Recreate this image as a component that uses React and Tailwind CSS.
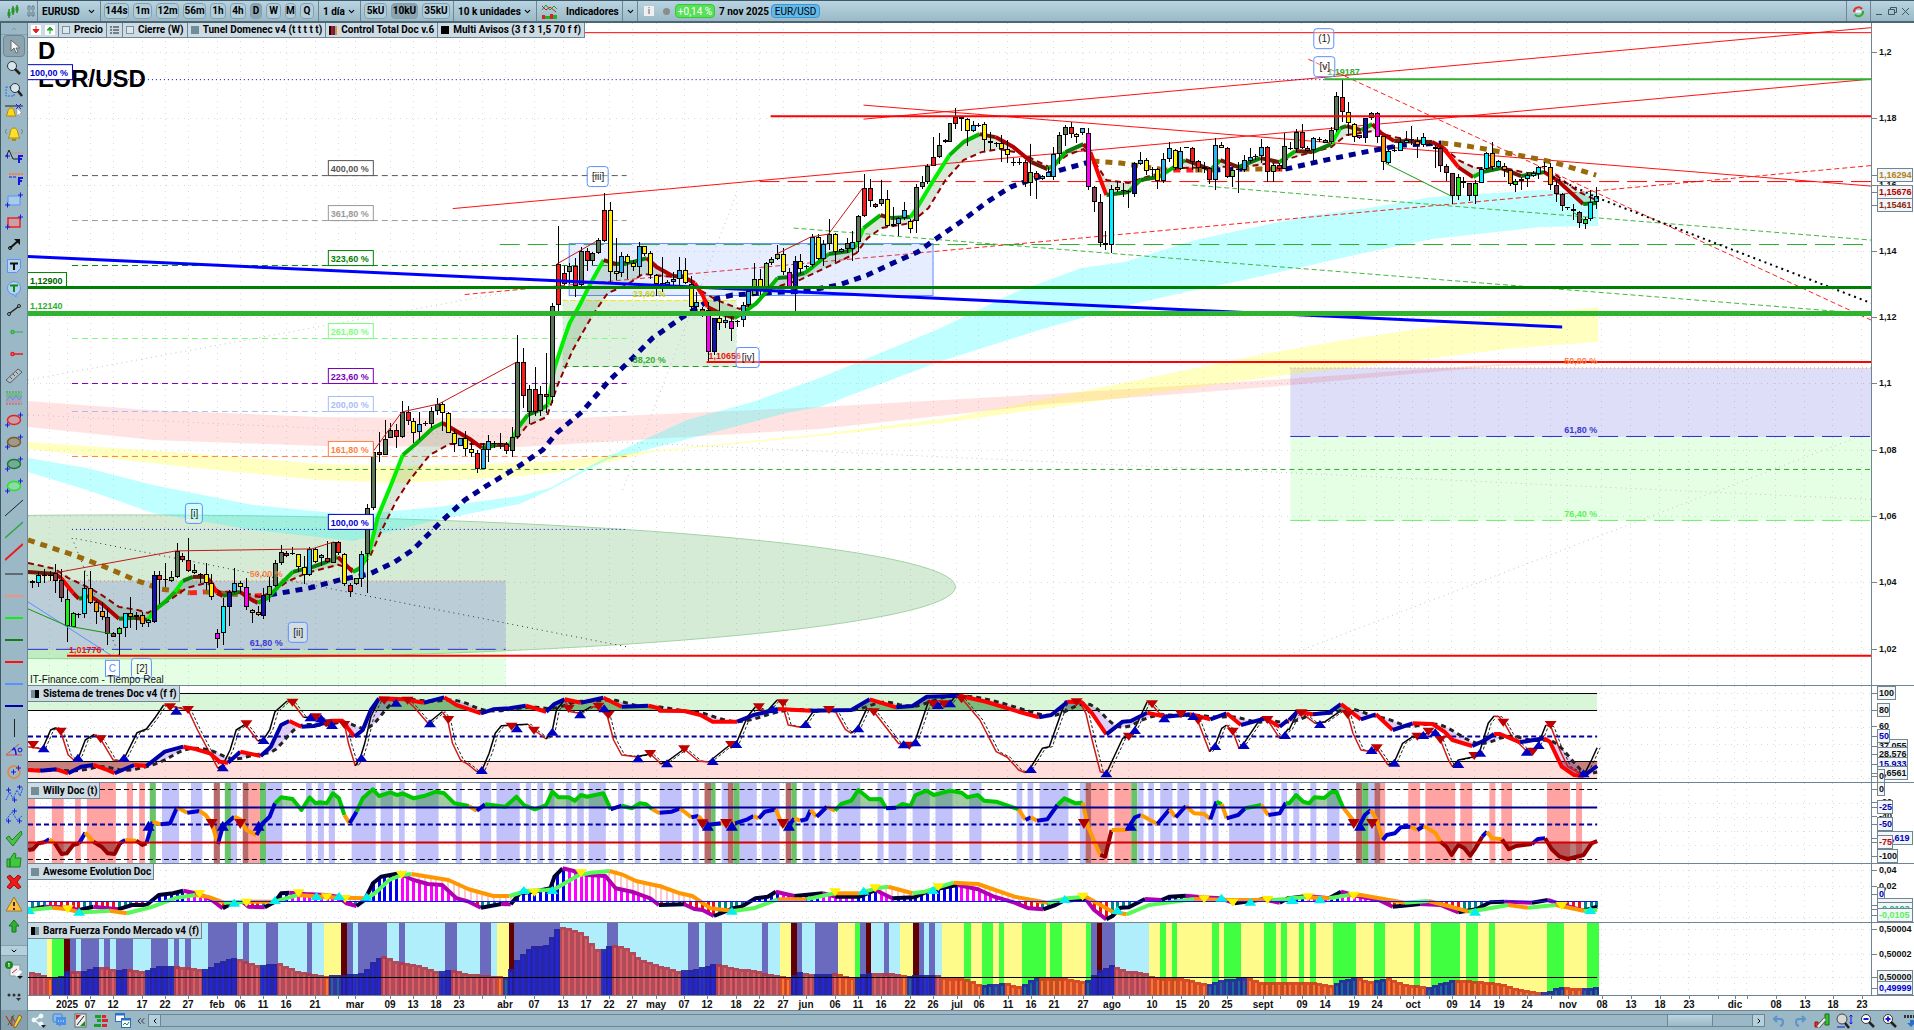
import React from "react";
import { ChevronDown, ChevronUp, ChevronLeft, ChevronRight, ChevronsLeft } from "lucide-react";

/* ---------- geometry helpers ---------- */

const X0 = 32.3;
const STEP = 5.7745;
const DATA_END = 1598;
const barX = (i) => X0 + i * STEP;

// A run of points stored relative to an origin, x in `sx` units per pixel and y in thirds of a pixel.
const run = (ox, sx, oy, text) =>
  text.split("|").map((p) => {
    const [x, y] = p.split(",").map(Number);
    return [ox + x / sx, oy + y / 3];
  });

const px = (text) => text.split("|").map((p) => p.split(",").map(Number));

const lower = (a, b, c) => [
  ...(a ? run(20, 2.45, 680, a) : []),
  ...(b ? run(660, 2.45, 680, b) : []),
  ...(c ? run(1290, 2.513, 680, c) : []),
];

const spans = (a, b, c) =>
  [
    [20, 2.45, a],
    [660, 2.45, b],
    [1290, 2.513, c],
  ].flatMap(([ox, sx, text]) =>
    text
      ? text.split("|").map((s) => {
          const [l, r] = s.split("-").map(Number);
          return [ox + l / sx, ox + r / sx];
        })
      : []
  );

const d = (pts) => "M" + pts.map((p) => `${p[0].toFixed(1)} ${p[1].toFixed(1)}`).join("L");
const area = (top, bottom) => d([...top, ...[...bottom].reverse()]) + "Z";

const valueAt = (pts, x) => {
  if (x <= pts[0][0]) return pts[0][1];
  for (let i = 1; i < pts.length; i++) {
    if (x <= pts[i][0]) {
      const [x1, y1] = pts[i - 1];
      const [x2, y2] = pts[i];
      return x2 === x1 ? y2 : y1 + ((y2 - y1) * (x - x1)) / (x2 - x1);
    }
  }
  return pts[pts.length - 1][1];
};

const resample = (pts) => {
  const out = [];
  for (let x = 28; x < DATA_END; x += STEP) out.push([x, valueAt(pts, x)]);
  out.push([DATA_END, valueAt(pts, DATA_END)]);
  return out;
};

// Splits a line into same-coloured stretches.
function Tinted({ pts, color, width }) {
  const groups = [];
  for (let i = 1; i < pts.length; i++) {
    const c = color(pts[i - 1], pts[i]);
    const last = groups[groups.length - 1];
    if (last && last.c === c) last.pts.push(pts[i]);
    else groups.push({ c, pts: [pts[i - 1], pts[i]] });
  }
  return groups.map((g, i) => (
    <path key={i} d={d(g.pts)} fill="none" stroke={g.c} strokeWidth={width} strokeLinejoin="round" />
  ));
}

/* ---------- price data ---------- */

const BODY = {
  g: "#5b7558", r: "#ff1a1a", y: "#fff200", c: "#2db4f0", C: "#00f0ff", m: "#ff00f0",
  b: "#1414b0", o: "#ff9a10", n: "#82404c", l: "#14f014", L: "#7cc04a", k: "#000",
};

const CANDLE_RUNS = [
  [420, "480,484,490,505,k|457,466,490,500,C|448,465,465,490,k|452,465,466,482,k|433,460,482,518,n|448,480,535,545,n|508,538,618,665,l|575,580,620,620,l|578,582,584,595,k|453,505,583,595,C|453,505,548,552,o|540,546,575,612,o|545,573,592,600,o|565,592,643,675,n|635,640,650,650,n|620,625,643,705,l|578,580,625,650,C|532,580,592,625,o|575,585,592,630,C|575,586,613,620,o|597,600,608,622,C|453,465,607,610,b|453,466,480,553,r|430,478,480,500,k|452,472,482,487,L|368,394,472,475,g|400,408,421,425,r|355,420,452,457,r|433,451,460,462,L|460,462,463,490,k|430,463,490,510,y|462,490,530,540,y|627,640,658,685,m|533,558,640,675,C|510,517,560,617,b|445,490,517,520,c|483,490,502,520,y|475,502,562,570,m|568,571,579,608,o|557,577,586,588,o|505,526,587,597,b|470,497,525,545,L|420,428,497,500,g|375,397,428,435,g|393,400,407,410,r|382,400,402,405,k|402,403,440,455,y|408,440,465,492,y|382,388,466,467,c|385,388,427,430,y|402,406,415,438,c|362,415,427,430,r|365,367,428,430,g|362,367,400,405,r|400,401,492,497,y|490,494,515,530,r|473,475,493,495,L|393,403,477,500,c|253,265,403,520,g|70,97,265,270,g"],
  [150, "845,907,914,935,r|810,866,914,915,g|820,840,865,865,g|823,840,862,895,r|753,787,862,865,g|768,787,813,825,r|805,813,848,880,y|785,823,847,870,c|813,820,822,827,k|770,783,822,833,g|745,763,782,795,g|755,763,790,843,y|785,790,848,850,y|838,848,883,905,y|863,865,887,887,c|843,865,898,917,y|875,898,910,922,y|900,910,958,970,r|880,898,958,958,c|855,873,900,937,c|872,880,883,895,k|848,880,883,898,k|875,883,902,912,r|832,862,902,920,g|555,637,862,865,g|593,637,738,775,r|705,718,787,822,g|650,718,785,797,r|708,733,783,797,g|608,733,742,790,r|460,468,740,758,g|228,343,466,482,r|348,370,402,405,r|340,347,367,403,g|325,348,408,440,r|292,303,405,407,g|295,303,334,362,r|305,310,334,345,g|263,271,310,312,g|128,181,272,275,r|155,181,367,397,y|265,363,371,390,y|305,317,370,382,c|313,317,338,388,y|330,338,350,363,y|277,289,352,378,c|287,289,311,317,y|303,310,376,387,y|373,376,403,437,y|320,400,402,425,b|390,397,405,408,c|365,388,397,407,c|322,361,388,415,c|323,361,400,403,y|378,401,470,482,y|425,455,470,487,c|470,478,486,500,r|455,479,607,632,m|503,505,607,615,b|447,505,520,540,y|490,511,520,535,c|500,512,538,572,m|510,513,517,530,b|455,466,511,530,c|420,423,466,470,c|340,388,435,435,L|358,388,410,435,y|337,340,410,412,L|320,328,338,345,L|285,313,328,330,L|295,313,367,375,y|355,367,410,410,m|317,332,415,485,b|313,332,356,372,y|345,347,350,358,k|253,260,346,350,c|252,260,328,330,y"],
  [90, "450,462,508,528,c|388,433,463,480,g|428,433,487,517,y|475,478,487,490,c|445,460,478,488,g|422,455,478,512,c|375,379,455,485,g|253,295,379,382,r|267,295,332,350,r|338,343,352,355,r|270,328,343,348,g|300,328,409,410,y|350,403,409,410,c|382,385,403,437,c|337,361,385,390,c|387,394,416,430,y|283,291,394,430,g|258,277,291,297,g|222,227,277,283,g|140,202,227,227,r|130,166,202,203,g|147,150,155,160,g|93,99,155,170,g|55,82,101,118,r|80,82,88,123,r|83,88,123,167,y|92,106,124,125,c|100,104,106,110,k|95,103,151,183,y|125,152,158,180,y|155,158,161,172,g|135,160,178,217,y|150,178,195,220,y|203,216,219,228,k|203,216,219,225,k|210,217,280,290,r|162,247,280,318,L|243,248,268,328,r|255,259,267,270,c|230,246,261,262,c|170,191,260,270,c|125,136,191,223,g|105,112,136,167,g|97,112,133,145,r|128,133,142,160,y|113,115,130,135,c|115,130,290,300,m|287,290,335,365,n|313,335,460,470,n|422,460,466,480,k|285,298,466,490,C|273,291,301,305,o|278,301,303,320,k|300,303,306,355,k|215,220,311,320,b|185,211,222,225,c|205,211,243,255,y|230,238,240,262,k|233,238,272,297,y|190,208,272,280,c|155,175,208,215,c|177,179,235,240,y|172,182,236,240,c|170,172,174,175,k|172,173,215,240,r|210,214,233,245,r|217,230,238,250,r|232,235,271,283,r|143,164,271,300,c|157,165,173,175,y|172,173,262,264,r|230,241,262,290,L|215,238,241,310,k|195,211,241,245,c|175,200,213,220,c|193,197,199,210,k|147,172,197,220,c|167,172,247,275,r|220,224,247,275,L|220,224,236,243,r|130,167,236,237,g|155,175,178,180,k|118,125,178,185,g|103,125,173,178,r|168,173,182,185,r"],
  [20, "350,355,390,422,c|350,357,358,365,k|357,360,368,370,g|322,331,367,372,g|217,228,331,335,g|180,230,277,305,r|245,277,308,347,y|308,311,350,367,y|345,346,355,357,m|293,295,355,370,b|275,280,293,300,g|277,280,352,368,m|347,349,427,450,o|388,394,428,432,C|375,390,393,395,k|353,366,392,393,C|333,360,368,370,C|317,358,360,375,k|350,362,376,413,o|338,352,375,380,C|370,372,374,378,k|375,380,387,443,n|380,384,437,455,n|432,437,460,483,n|460,460,529,553,n|463,471,529,540,l|472,484,490,505,n|488,490,527,543,n|480,489,527,552,l|442,447,490,490,C|397,399,447,450,C|365,399,441,450,o|420,424,440,443,C|430,438,450,470,o|450,451,493,497,o|478,482,494,517,l|470,476,484,510,C|458,466,477,500,C|452,458,467,470,C|438,442,463,477,C|427,438,440,458,k|430,440,495,510,o|480,494,523,545,n|520,523,557,573,n|560,562,565,570,k|553,566,574,600,l|573,577,608,623,n|590,597,611,627,l|510,547,598,602,C|500,529,545,567,C"],
];

const CANDLES = CANDLE_RUNS.flatMap(([base, text]) =>
  text.split("|").map((row) => {
    const c = row.split(",");
    const y = (v) => Math.round(base + Number(v) / 3);
    return { high: y(c[0]), top: y(c[1]), bottom: y(c[2]), low: y(c[3]), kind: c[4] };
  })
);

const FAST_MA = px("28,572|55,574|61,578|73,593|79,599|90,596|102,604|119,619|135,618|148,620|155,610|165,602|175,592|183,581|193,577|206,577|211,582|217,593|223,596|240,592|252,600|258,603|268,598|278,587|293,572|313,567|327,562|338,557|348,567|353,572|361,568|370,550|378,517|392,483|403,455|417,443|433,428|443,423|453,429|470,439|482,448|497,445|510,445|518,428|528,415|538,411|548,405|555,367|565,337|570,323|580,305|590,285|604,260|617,264|633,262|647,258|657,267|673,276|684,277|695,283|703,295|708,307|720,313|735,318|743,313|757,303|768,290|778,278|790,277|805,273|813,267|829,254|850,251|857,245|864,228|881,215|891,218|911,217|918,207|936,177|950,155|964,142|980,134|996,137|1014,147|1032,162|1048,169|1055,165|1066,152|1084,144|1091,152|1100,177|1107,195|1129,192|1141,180|1159,177|1173,168|1186,160|1200,165|1211,170|1221,160|1239,167|1261,158|1280,162|1296,151|1313,152|1332,144|1341,128|1347,126|1362,130|1373,124|1382,133|1395,141|1433,142|1444,148|1459,167|1474,177|1483,172|1502,168|1522,176|1545,172|1558,180|1584,204|1597,203");
const SLOW_MA = px("28,563|55,569|68,578|87,587|100,594|119,607|137,610|148,613|167,602|187,588|207,583|220,592|240,592|260,597|273,592|287,582|307,573|338,565|357,570|370,557|382,530|397,500|410,480|430,455|450,444|513,444|527,426|547,417|558,385|573,350|593,315|608,293|627,285|643,274|687,278|700,290|717,300|740,309|757,302|773,288|800,280|817,272|836,263|857,253|868,238|882,228|911,223|929,208|946,180|964,160|982,152|1000,149|1021,153|1050,167|1068,155|1084,149|1096,163|1107,180|1129,183|1143,178|1179,168|1214,167|1250,166|1279,162|1298,156|1332,147|1347,135|1373,131|1395,137|1442,145|1459,160|1476,168|1506,168|1528,173|1554,173|1580,192|1597,200");

const LONG_MA = [
  ["#9a6a0a", "28,540|76,556|105,567|135,580|160,589|190,593"],
  ["#ff2020", "190,593|205,592"],
  ["#9a6a0a", "205,592|255,596"],
  ["#ff2020", "255,596|270,595"],
  ["#00008f", "270,595|310,588|340,580|370,574|395,562|413,550|440,523|465,500|485,487|518,467|543,450|557,433|582,412|610,380|633,358|653,338|683,317|710,300|733,295|763,293|806,291|839,285|868,275|889,265|918,252|939,237|961,222|986,203|1011,187|1036,178|1061,170|1093,161"],
  ["#9a6a0a", "1093,161|1121,163|1161,169"],
  ["#ff2020", "1161,170|1196,170"],
  ["#9a6a0a", "1196,170|1214,170"],
  ["#00008f", "1214,170|1243,169"],
  ["#9a6a0a", "1243,169|1276,169"],
  ["#ff2020", "1276,169|1286,169"],
  ["#00008f", "1286,169|1326,160|1365,152|1403,145|1442,143"],
  ["#9a6a0a", "1442,143|1455,144|1481,148|1519,155|1554,162|1597,175"],
];

const PINK = area(
  px("28,401|150,410|320,417|553,419|820,407|1050,394|1270,380|1400,371|1500,364|1597,361"),
  px("28,427|153,440|320,446|520,447|687,437|820,429|1050,404|1270,387|1400,375|1500,366|1597,363")
);
const YELLOW = area(
  px("28,442|187,453|320,464|400,466|487,464|560,461|610,455|700,446|820,434|950,418|1050,398|1270,353|1345,340|1498,317|1599,307"),
  px("28,449|187,467|320,480|400,483|513,477|560,472|610,462|653,452|820,436|950,422|1050,408|1270,377|1401,362|1516,348|1599,342")
);
const CYAN = area(
  px("28,458|87,468|153,485|253,505|353,515|437,507|520,496|550,488|607,457|687,420|753,402|820,378|939,329|1014,293|1082,268|1125,262|1196,240|1307,216|1369,208|1433,197|1541,190|1599,193"),
  px("28,472|87,490|153,513|253,530|353,541|437,520|520,504|550,490|607,460|700,436|787,413|820,407|939,362|1043,329|1129,305|1196,290|1240,281|1369,252|1433,239|1541,227|1599,226")
);

/* ---------- axis data ---------- */

const DATES = [
  [67, "2025"], [90, "07"], [113, "12"], [142, "17"], [165, "22"], [188, "27"], [217, "feb"], [240, "06"], [263, "11"],
  [286, "16"], [315, "21"], [355, "mar"], [390, "09"], [413, "13"], [436, "18"], [459, "23"], [505, "abr"], [534, "07"],
  [563, "13"], [586, "17"], [609, "22"], [632, "27"], [656, "may"], [684, "07"], [707, "12"], [736, "18"], [759, "22"],
  [783, "27"], [806, "jun"], [835, "06"], [858, "11"], [881, "16"], [910, "22"], [933, "26"], [957, "jul"], [979, "06"],
  [1008, "11"], [1031, "16"], [1054, "21"], [1083, "27"], [1112, "ago"], [1152, "10"], [1181, "15"], [1204, "20"],
  [1227, "25"], [1263, "sept"], [1302, "09"], [1325, "14"], [1354, "19"], [1377, "24"], [1413, "oct"], [1452, "09"],
  [1475, "14"], [1499, "19"], [1527, "24"], [1568, "nov"], [1602, "08"], [1631, "13"], [1660, "18"], [1689, "23"],
  [1735, "dic"], [1776, "08"], [1805, "13"], [1833, "18"], [1862, "23"],
];
const MINOR = [49, 338, 482, 1129, 1280, 1400, 1429, 1551, 1718, 1747];
const GRID_X = [...DATES.map((x) => x[0]), ...MINOR];

const PRICES = [
  [52, "1,2"], [118, "1,18"], [185, "1,16"], [251, "1,14"], [317, "1,12"], [383, "1,1"], [450, "1,08"], [516, "1,06"],
  [582, "1,04"], [649, "1,02"],
];

const FONT = "'Liberation Sans', Arial, sans-serif";

function Grid({ y1, y2, rows }) {
  return (
    <g stroke="#dcdcdc" strokeWidth="1" strokeDasharray="1 5" shapeRendering="crispEdges">
      {GRID_X.map((x) => (
        <line key={x} x1={x + 0.5} x2={x + 0.5} y1={y1} y2={y2} />
      ))}
      {rows.map((y) => (
        <line key={y} x1="28" x2="1872" y1={y + 0.5} y2={y + 0.5} />
      ))}
    </g>
  );
}

function Panel({ top, height, className, legend, children, axis }) {
  return (
    <section className={`flex min-h-0 border-t border-[#6f8692] ${className}`}>
      <div className="relative min-w-0 flex-1 border-r border-[#6f8692]">
        <svg
          className="absolute inset-0 h-full w-full"
          viewBox={`28 ${top} 1844 ${height}`}
          preserveAspectRatio="xMinYMid meet"
          fontFamily={FONT}
        >
          {children}
        </svg>
        {legend}
      </div>
      <svg
        className="h-full w-[42px] shrink-0"
        viewBox={`1872 ${top} 42 ${height}`}
        preserveAspectRatio="xMinYMid meet"
        fontFamily={FONT}
        fontSize="9"
        fontWeight="700"
      >
        {axis}
      </svg>
    </section>
  );
}

function AxisTick({ y, text, color = "#111", boxed, w = 35 }) {
  return (
    <g>
      <path d={`M1872 ${y + 0.5}h5`} stroke="#6f8692" />
      {boxed && <rect x="1877.5" y={y - 6.5} width={w} height="13" fill="#f2f6f8" stroke="#6f8692" />}
      <text x="1879" y={y + 3} fill={color}>{text}</text>
    </g>
  );
}

function Legend({ swatch, children }) {
  return (
    <div className="absolute left-0 top-0 flex h-4 items-center gap-1 border-b border-r border-[#6f8692] bg-[#cddbe4] pl-[3px] pr-0.5 font-['Roboto',Arial,sans-serif] text-[10px] font-bold leading-none text-black">
      {swatch}
      <span>{children}</span>
    </div>
  );
}

const Swatch = ({ className }) => <span className={`h-2 w-2 shrink-0 ${className}`} />;
const HalfSwatch = ({ left, right }) => (
  <span className="flex h-2 w-2 shrink-0">
    <span className={`flex-1 ${left}`} />
    <span className={`flex-1 ${right}`} />
  </span>
);

/* ---------- main price chart ---------- */

const RED_ZIGZAG = ["55,573|176,551|312,549|334,542", "373,452|402,412|439,404|517,362", "557,264|597,241", "777,254|811,237|829,234|863,188"];

const FIBS = [
  [175, "400,00 %", "#555555", "6 4"],
  [220, "361,80 %", "#999999", "6 4"],
  [265, "323,60 %", "#008000", "6 4"],
  [338, "261,80 %", "#7cff7c", "6 4"],
  [383, "223,60 %", "#7a00b8", "6 4"],
  [411, "200,00 %", "#a9bdf5", "6 4"],
  [456, "161,80 %", "#ff8040", "6 4"],
  [529, "100,00 %", "#0000d0", "1 3"],
];

const WAVES = [
  [185, 503, 19, "[i]"], [288, 622, 21, "[ii]"], [131, 658, 22, "[2]"], [587, 166, 23, "[iii]"], [736, 347, 25, "[iv]"],
  [1314, 28, 22, "(1)"], [1314, 56, 23, "[v]"],
];

function HLine({ y, x1 = 28, x2 = 1872, color, w = 1, dash }) {
  return <line x1={x1} x2={x2} y1={y} y2={y} stroke={color} strokeWidth={w} strokeDasharray={dash} />;
}

function maColor(a, b) {
  const s = (b[1] - a[1]) / (b[0] - a[0]);
  if (s < -1.3) return "#00f000";
  if (s < -0.45) return "#00b800";
  if (s < 0) return "#0a7a0a";
  if (s < 0.5) return "#6e1a08";
  if (s < 1.2) return "#b00000";
  return "#ff0000";
}

function PriceChart() {
  return (
    <Panel
      top={23}
      height={662}
      className="flex-1 border-t-0"
      legend={<MainLegend />}
      axis={
        <>
          {PRICES.map(([y, t]) => (
            <AxisTick key={t} y={y} text={t} />
          ))}
          <AxisTick y={175} text="1,16294" color="#b0801c" boxed />
          <AxisTick y={192} text="1,15676" color="#b00000" boxed />
          <AxisTick y={205} text="1,15461" color="#8a2a10" boxed />
        </>
      }
    >
      <Grid y1={23} y2={685} rows={PRICES.map((p) => p[0])} />
      <g fontWeight="700" fontSize="24" fill="#000">
        <text x="38" y="59">D</text>
        <text x="38" y="87">EUR/USD</text>
      </g>

      <ellipse cx="122" cy="587" rx="834" ry="72" fill="#008000" fillOpacity=".16" stroke="#a4d2a4" />
      <rect x="28" y="581" width="478" height="69" fill="#3232dc" fillOpacity=".16" />
      <rect x="28" y="650" width="478" height="36" fill="#00ff00" fillOpacity=".1" />
      <rect x="1291" y="368" width="581" height="69" fill="#3232dc" fillOpacity=".16" />
      <rect x="1291" y="437" width="581" height="84" fill="#00ff00" fillOpacity=".1" />
      <rect x="563" y="300" width="174" height="67" fill="#009600" fillOpacity=".13" />
      <path d={PINK} fill="#ff0000" fillOpacity=".11" />
      <path d={YELLOW} fill="#ffff00" fillOpacity=".25" />
      <path d={CYAN} fill="#00ffff" fillOpacity=".25" />

      <g fill="none" strokeWidth="1">
        <path d="M28 380L503 293M623 490L737 193M28 415L1872 499.5M1290 655L1872 432" stroke="#c4c4c4" strokeDasharray="1 4" />
        <path d="M119 655L72 538L627 647" stroke="#333" strokeDasharray="1 4" />
        <path d="M794 228L1872 314M1193 185L1872 240" stroke="#43b543" strokeDasharray="5 3" />
        <path d="M465 294.500L1872 165.500" stroke="#ff2020" strokeDasharray="5 3" />
        <path d="M1309 59L1872 320" stroke="#ff2020" strokeDasharray="5 3" />
        <path d="M864 119L1872 27.500M453 208.500L1872 79M864 105L1872 186" stroke="#ff1010" />
      </g>
      <HLine y={32.5} x1={551} color="#ff0000" />
      <HLine y={79.5} x2={1325} color="#0000c0" dash="1 3" />
      <HLine y={581} x2={506} color="#ff7a40" dash="1 3" />
      <HLine y={649.5} x2={506} color="#2a2ad8" dash="20 8" />
      <HLine y={368} x1={1291} color="#ff7a40" dash="1 3" />
      <HLine y={436.500} x1={1291} color="#2a2ad8" dash="20 8" />
      <HLine y={520.500} x1={1291} color="#66f066" dash="20 8" />
      <HLine y={300.5} x1={563} x2={737} color="#f5e800" w={1} dash="5 3" />
      <HLine y={366.500} x1={563} x2={737} color="#22a022" dash="6 4" />
      <HLine y={469.5} x1={309} color="#2aa82a" dash="5 4" />
      <HLine y={181.5} x1={760} color="#ff0000" dash="20 8" />
      <HLine y={244.5} x1={500} color="#2aa82a" dash="20 8" />

      {FIBS.map(([y, t, c, dash]) => (
        <HLine key={t} y={y + 0.5} x1={72} x2={627} color={c} dash={dash} />
      ))}

      <rect x="569.500" y="243.500" width="364" height="52" fill="#6090ff" fillOpacity=".16" stroke="#5a90ff" />

      <path d={area(resample(FAST_MA), resample(SLOW_MA))} fill="#408040" fillOpacity=".2" />
      {LONG_MA.map(([c, t], i) => (
        <path key={i} d={d(px(t))} fill="none" stroke={c} strokeWidth="5" strokeDasharray="7 6" />
      ))}
      <path d={d(SLOW_MA)} fill="none" stroke="#8f0000" strokeWidth="2" strokeDasharray="6 4" />
      <Tinted pts={FAST_MA} color={maColor} width={4} />

      <g shapeRendering="crispEdges">
        {CANDLES.map((c, i) => {
          const x = Math.round(barX(i));
          const h = c.bottom - c.top;
          return (
            <g key={i}>
              <rect x={x} y={c.high} width="1" height={Math.max(1, c.low - c.high)} fill="#000" />
              <rect x={x - 2} y={c.top} width="5" height={Math.max(1, h)} fill="#000" />
              {h > 2 && <rect x={x - 1} y={c.top + 1} width="3" height={h - 2} fill={BODY[c.kind]} />}
            </g>
          );
        })}
      </g>

      {RED_ZIGZAG.map((t) => (
        <path key={t} d={d(px(t))} fill="none" stroke="#c01818" />
      ))}
      <path d="M28 602L112 656" stroke="#5a90ff" fill="none" />
      <path d="M28 609L67 626L112 634M1386 163L1452 196M1574 212L1586 221" stroke="#149614" fill="none" />
      <path d="M1554 177L1599 198L1872 303" fill="none" stroke="#000" strokeWidth="2" strokeDasharray="2 4" />

      <HLine y={116} x1={771} color="#ff0000" w={2} />
      <HLine y={79} x1={1325} color="#2fae2f" w={2} />
      <path d="M28 256.500L1563 327" stroke="#0000ff" strokeWidth="3" />
      <HLine y={287.5} color="#008000" w={3} />
      <HLine y={313.5} color="#2fb42f" w={5} />
      <HLine y={362} x1={707} color="#ff0000" w={2} />
      <HLine y={656} x1={67} color="#ff0000" w={2} />

      <g fontSize="9" fontWeight="700">
        {FIBS.map(([y, t, c]) => (
          <g key={t}>
            <rect x="328.500" y={y - 14.5} width="45" height="15" fill="#fff" stroke={c} />
            <text x="331" y={y - 3} fill={c}>{t}</text>
          </g>
        ))}
        <rect x="24.500" y="64.500" width="48" height="15" fill="#fff" stroke="#0000d0" />
        <text x="30" y="76" fill="#0000d0">100,00 %</text>
        <rect x="24.500" y="272.500" width="42" height="14" fill="#fff" stroke="#008000" />
        <text x="30" y="284" fill="#006000">1,12900</text>
        <text x="30" y="309" fill="#2fae2f">1,12140</text>
        <text x="250" y="577" fill="#ff8040">50,00 %</text>
        <text x="250" y="646" fill="#3a3ad0">61,80 %</text>
        <text x="633" y="297" fill="#d4d400">23,60 %</text>
        <text x="633" y="363" fill="#2fae2f">38,20 %</text>
        <text x="1565" y="364" fill="#ff8040">50,00 %</text>
        <text x="1565" y="433" fill="#3a3ad0">61,80 %</text>
        <text x="1565" y="517" fill="#5cf05c">76,40 %</text>
        <text x="1328" y="75" fill="#2fae2f">1,19187</text>
        <text x="709" y="359" fill="#f01010">1,10656</text>
        <text x="69" y="653" fill="#f01010">1,01776</text>
      </g>
      {WAVES.map(([x, y, w, t]) => (
        <g key={t}>
          <rect x={x + 0.5} y={y + 0.5} width={w - 2} height="20" rx="3" fill="#fff" fillOpacity=".35" stroke="#5a90ff" />
          <text x={x + w / 2} y={y + 14} fontSize="10" textAnchor="middle" fill="#222">{t}</text>
        </g>
      ))}
      <rect x="105.500" y="660.500" width="14" height="16" fill="#fff" stroke="#5a90ff" />
      <text x="112.500" y="672" fontSize="10" textAnchor="middle" fill="#5a90ff">C</text>
      <text x="30" y="683" fontSize="10" fill="#111">IT-Finance.com - Tiempo Real</text>
    </Panel>
  );
}

function MainLegend() {
  const cell = "flex h-full items-center gap-1 whitespace-nowrap border-r border-[#6f8692] px-[3px]";
  return (
    <div className="absolute left-0 top-0 flex h-[15px] items-center border-b border-[#6f8692] bg-[#cddbe4] font-['Roboto',Arial,sans-serif] text-[10px] font-bold leading-none text-black">
      <div className={cell}>
        <svg width="10" height="10" viewBox="0 0 10 10"><rect width="10" height="10" fill="#fff" /><path d="M5 1v4M2 4.500h6L5 8z" fill="#e02020" stroke="#e02020" /></svg>
        <svg width="10" height="10" viewBox="0 0 10 10"><rect width="10" height="10" fill="#fff" /><path d="M5 9V5M2 5h6L5 2z" fill="#22a822" stroke="#22a822" /></svg>
      </div>
      <div className={cell}><Swatch className="border border-[#7d929e] bg-[#dde7ee]" />Precio</div>
      <div className={cell}>
        <svg width="9" height="8" viewBox="0 0 9 8" stroke="#222"><path d="M0 1h2M3 1h6M0 4h2M3 4h6M0 7h2M3 7h6" /></svg>
      </div>
      <div className={cell}><Swatch className="border border-[#7d929e] bg-[#dde7ee]" />Cierre (W)</div>
      <div className={cell}><Swatch className="bg-[#728c98]" />Tunel Domenec v4 (t t t t t)</div>
      <div className={cell}>
        <span className="flex h-[9px] w-2">
          <span className="flex-1 bg-black" /><span className="flex-1 bg-red-600" /><span className="flex-1 bg-blue-900" /><span className="flex-1 bg-orange-400" />
        </span>
        Control Total Doc v.6
      </div>
      <div className={cell}><Swatch className="bg-black" />Multi Avisos (3 f 3 1,5 70 f f)</div>
    </div>
  );
}

/* ---------- oscillators ---------- */

const TRAIN_FAST = lower(
  "20,200|55,207|75,150|88,143|100,155|118,225|132,240|145,228|160,180|182,163|198,178|228,240|252,243|270,200|287,158|310,147|330,115|352,75|382,82|412,90|435,150|470,230|485,265|497,255|515,210|530,150|552,133|583,183|597,178|612,150|625,95|655,63|668,68|695,112|720,112|740,115|750,130|765,128|782,118|795,130|805,190|822,258|835,230|845,190|860,110|880,60|920,62|945,58|965,80|1000,130|1010,120|1035,95|1048,118|1060,190|1080,240|1100,255|1120,275|1132,272|1150,220|1165,160|1180,137|1245,133|1260,150|1290,177|1305,150|1315,90|1335,60|1350,95|1372,100|1400,80|1418,82|1440,110|1455,180|1475,225|1510,230|1545,222|1566,245",
  "2,252|18,245|60,207|95,243|120,246|175,192|188,190|215,110|235,80|262,95|288,60|300,70|315,135|345,142|358,128|375,97|415,90|432,97|455,148|470,160|487,140|508,85|525,95|585,190|612,200|627,180|660,60|670,72|710,72|725,48|742,58|785,120|825,215|852,232|880,270|897,278|910,262|938,205|955,200|995,62|1030,68|1045,100|1060,180|1080,275|1095,280|1110,240|1135,175|1150,170|1165,145|1195,65|1207,75|1225,100|1245,108|1278,103|1308,108|1320,125|1348,215|1362,195|1378,145|1390,135|1405,155|1420,205|1432,190|1475,112|1490,120|1520,175|1533,160|1540,148",
  "0,148|20,98|32,100|65,130|90,125|130,92|145,95|160,160|180,210|207,215|220,205|248,255|264,245|285,190|310,170|335,168|352,155|368,158|380,180|400,240|410,260|425,240|465,230|480,210|500,130|515,108|527,110|540,128|560,170|598,215|612,213|627,190|645,135|658,140|680,210|700,260|730,280|745,275|760,240|774,203"
);
const TRAIN_SLOW = lower(
  "20,270|50,272|90,268|118,280|150,260|180,255|210,268|232,280|280,255|310,258|355,215|400,200|430,207|465,220|490,245|510,248|540,215|590,228|615,200|640,135|660,123|690,140|720,138|765,122|790,122|820,170|840,150|860,90|880,55|940,58|990,68|1040,52|1070,75|1130,100|1160,88|1200,85|1240,77|1290,95|1310,72|1335,58|1375,68|1430,53|1475,80|1540,77|1566,85",
  "0,92|60,93|100,105|130,125|190,125|230,105|290,87|370,92|470,90|515,58|580,82|620,78|655,50|735,47|800,65|880,95|930,112|960,105|1000,65|1035,67|1060,100|1095,163|1135,125|1155,123|1195,98|1240,110|1300,103|1350,118|1390,100|1425,135|1485,115|1520,140|1540,120",
  "0,120|20,95|60,103|100,98|130,72|180,118|218,103|260,150|310,130|360,132|390,155|410,180|460,198|490,182|515,162|530,162|580,187|640,175|655,185|685,260|715,285|740,288|774,258"
);
const TRAIN_DOWN = lower(
  "32,195|100,155|198,178|368,82|412,90|555,133|668,68|725,112|752,130|795,135|893,62|950,62|1050,120|1205,140|1260,152|1345,87|1418,80|1443,105|1545,222",
  "60,208|175,195|243,82|302,70|415,90|525,97|612,197|670,73|697,73|740,58|1022,67|1150,170|1207,73|1278,103|1320,122|1405,155|1490,120",
  "30,100|147,105|220,205|322,170|350,155|380,180|465,228|538,128|612,215|657,135"
);
const TRAIN_UP = lower(
  "58,205|142,233|255,233|383,92|497,262|597,180|712,112|738,115|765,135|837,233|922,68|1005,130|1132,270|1218,145|1305,155|1373,103|1432,85|1515,235",
  "18,250|130,243|188,192|277,87|358,132|487,145|598,193|627,187|682,75|712,70|910,267|1095,280|1165,150|1237,115|1308,108|1362,198|1432,195|1533,165",
  "77,132|207,210|264,248|337,165|367,157|425,252|480,218|597,215|627,195|740,280"
);

function Marks({ pts, up, color, s = 6, h = 4 }) {
  return pts.map(([x, y], i) => (
    <path key={i} fill={color} d={up ? `M${x - s} ${y + h}h${2 * s}L${x} ${y - h}z` : `M${x - s} ${y - h}h${2 * s}L${x} ${y + h}z`} />
  ));
}

function Trains() {
  const slow = resample(TRAIN_SLOW);
  const signal = slow.map(([x], i) => {
    const part = slow.slice(Math.max(0, i - 4), i + 1);
    return [x, part.reduce((s, p) => s + p[1], 0) / part.length];
  });
  const capped = slow.map(([x, y]) => [x, Math.min(y, 710.5)]);
  const floored = slow.map(([x, y]) => [x, Math.max(y, 761.5)]);
  const level = (y) => slow.map(([x]) => [x, y]);
  return (
    <Panel
      top={686}
      height={96}
      className="h-[97px]"
      legend={<Legend swatch={<HalfSwatch left="bg-[#728c98]" right="bg-black" />}>Sistema de trenes Doc v4 (f f)</Legend>}
      axis={
        <>
          <AxisTick y={726} text="60" />
          <AxisTick y={746} text="37,055" boxed w={30} />
          <AxisTick y={754} text="28,576" boxed w={30} />
          <AxisTick y={764} text="15,933" color="#0000b0" boxed w={30} />
          <AxisTick y={773} text="5,6561" boxed w={30} />
          <AxisTick y={693} text="100" boxed w={18} />
          <AxisTick y={710} text="80" boxed w={12} />
          <AxisTick y={736} text="50" color="#0000c0" boxed w={12} />
          <AxisTick y={776} text="0" boxed w={7} />
        </>
      }
    >
      <Grid y1={686} y2={782} rows={[693, 710, 727, 744, 761, 778]} />
      <rect x="28" y="694" width="1570" height="17" fill="#00c000" fillOpacity=".15" />
      <rect x="28" y="761" width="1570" height="17" fill="#ff2010" fillOpacity=".15" />
      <path d={area(capped, level(710.5))} fill="#107010" fillOpacity=".45" />
      <path d={area(floored, level(761.5))} fill="#801010" fillOpacity=".45" />
      <path d={area(slow, signal)} fill="#8040e0" fillOpacity=".25" />
      <HLine y={693.5} x2={1598} color="#000" />
      <HLine y={710.5} x2={1598} color="#000" />
      <HLine y={761.5} x2={1598} color="#000" />
      <HLine y={778.500} x2={1598} color="#000" />
      <HLine y={736.5} x2={1598} color="#0000a0" w={2} dash="5 3" />
      <path d={d(TRAIN_FAST.map(([x, y]) => [x + 3, y]))} fill="none" stroke="#222" strokeDasharray="3 2" />
      <Tinted pts={TRAIN_FAST} color={(a, b) => (b[1] <= a[1] ? "#000" : "#d01818")} width={1.5} />
      <path d={d(signal)} fill="none" stroke="#222" strokeWidth="3" strokeDasharray="5 4" />
      <Tinted pts={TRAIN_SLOW} color={(a, b) => (b[1] < a[1] ? "#0000a8" : "#ff0000")} width={4} />
      <Marks pts={TRAIN_DOWN} color="#c00000" />
      <Marks pts={TRAIN_UP} up color="#0000c0" />
    </Panel>
  );
}

const WILLY_BANDS = [
  ["#ffa3a3", spans("20-37|78-107|135-149|164-235|262-277|292-306|560-588", "1058-1100|1115-1156", "229-241|299-329|342-417|430-460|503-518|533-560|648-706|721-736")],
  ["#c2c2fb", spans(
    "348-390|419-447|517-532|603-643|701-715|730-745|757-772|813-872|884-914|929-943|970-1026|1068-1083|1127-1155|1168-1225|1240-1253|1268-1282|1296-1310|1338-1352|1366-1382|1394-1436|1466-1480|1507-1521",
    "0-54|81-96|152-167|196-238|250-294|350-380|392-421|436-492|534-549|561-605|620-662|676-718|759-789|875-889|902-916|931-1002|1030-1044|1172-1186|1198-1212|1227-1257|1269-1298|1325-1340|1355-1370|1396-1482|1497-1511|1524-1538",
    "10-25|53-68|95-126|199-214"
  )],
  ["#b96a6a", spans("475-490|546-560", "110-126|167-181|309-323|1044-1058", "168-183|214-229")],
  ["#69c469", spans("318-333|502-517|588-603", "126-137|181-196|323-336|1156-1171", "183-199")],
];
const WILLY = lower(
  "20,510|32,508|45,490|60,487|72,478|85,490|102,522|115,520|130,495|145,490|160,458|180,485|200,500|215,520|232,522|245,490|258,480|285,482|300,495|310,490|325,425|345,433|368,430|385,382|410,398|440,393|455,405|470,430|485,492|497,440|525,410|540,418|555,450|580,465|595,430|612,410|625,370|640,352|668,357|690,390|710,352|725,370|735,367|752,370|767,340|782,355|795,405|808,430|825,395|840,355|865,328|880,348|908,337|925,345|938,340|965,355|990,348|1020,335|1040,340|1065,370|1100,378|1120,392|1140,373|1190,380|1217,350|1235,375|1262,388|1290,375|1305,335|1320,352|1345,352|1360,362|1375,345|1390,350|1430,340|1448,388|1475,377|1500,385|1520,370|1535,373|1550,388|1566,398",
  "0,398|30,395|50,385|78,412|95,408|115,435|150,430|185,430|215,418|230,408|243,415|258,395|285,388|300,435|315,440|330,415|345,422|360,418|370,390|385,410|410,380|430,392|445,372|470,362|487,330|515,358|542,357|555,385|580,383|595,372|615,378|627,345|655,332|672,345|712,332|740,338|755,352|780,345|795,362|825,365|880,388|897,420|910,412|925,422|950,418|975,375|992,355|1020,370|1037,368|1050,440|1080,525|1092,530|1108,450|1145,450|1165,412|1180,405|1220,432|1250,388|1265,412|1290,378|1310,400|1335,402|1350,418|1365,365|1378,372|1390,415|1418,405|1435,385|1475,375|1492,405|1520,400|1535,368|1540,370",
  "0,370|17,345|35,365|50,370|63,352|88,354|105,337|118,335|135,382|160,420|175,440|190,405|205,390|220,420|235,480|245,465|265,460|280,442|305,440|322,450|338,438|368,460|380,485|395,500|408,525|425,495|440,505|455,527|468,505|485,470|497,455|510,475|535,478|552,508|570,498|610,492|625,477|643,475|660,508|680,530|700,537|740,525|760,490|774,483"
);

function willyColor(a, b) {
  const m = (a[1] + b[1]) / 2;
  if (m < 807.5) return "#00c800";
  if (m > 842) return "#960000";
  return b[1] < a[1] ? "#0000d0" : "#ff9a00";
}

function Willy() {
  const line = resample(WILLY);
  const level = (y) => line.map(([x]) => [x, y]);
  return (
    <Panel
      top={783}
      height={80}
      className="h-[81px]"
      legend={<Legend swatch={<Swatch className="bg-[#728c98]" />}>Willy Doc (t)</Legend>}
      axis={
        <>
          <AxisTick y={802} text="-20" />
          <AxisTick y={816} text="-40" />
          <AxisTick y={838} text="-72,619" color="#0000c0" boxed />
          <AxisTick y={789} text="0" boxed w={7} />
          <AxisTick y={807} text="-25" color="#0000b0" boxed w={15} />
          <AxisTick y={824} text="-50" color="#0000b0" boxed w={15} />
          <AxisTick y={842} text="-75" color="#c00000" boxed w={15} />
          <AxisTick y={856} text="-100" boxed w={20} />
        </>
      }
    >
      <Grid y1={783} y2={863} rows={[803, 817, 831, 845]} />
      {WILLY_BANDS.map(([c, list]) =>
        list.map(([l, r], i) => <rect key={c + i} x={l} y="783" width={r - l} height="80" fill={c} />)
      )}
      <path d={area(line.map(([x, y]) => [x, Math.min(y, 807.5)]), level(807.5))} fill="#309030" fillOpacity=".45" />
      <path d={area(line.map(([x, y]) => [x, Math.max(y, 842.5)]), level(842.5))} fill="#801010" fillOpacity=".55" />
      <HLine y={789.5} x2={1598} color="#000" dash="5 3" />
      <HLine y={859.5} x2={1598} color="#000" dash="5 3" />
      <HLine y={824.5} x2={1598} color="#0000a0" w={2} dash="5 3" />
      <Tinted pts={WILLY} color={willyColor} width={4} />
      <HLine y={807.5} x2={1598} color="#000090" w={2} />
      <HLine y={842.5} x2={1598} color="#d00000" w={2} />
      <Marks pts={lower("470,432|540,432", "105,433|163,432|302,432|1040,432", "162,432|208,432")} color="#b00000" s={6} h={5} />
      <Marks pts={lower("315,437|497,437|585,437", "118,437|177,437|317,437|1155,437", "178,437")} up color="#0000c0" s={6} h={5} />
    </Panel>
  );
}

const AO_FAST = lower(
  "20,690|60,680|110,682|145,690|180,680|240,688|275,675|310,675|340,645|375,640|400,632|440,642|470,660|497,685|520,670|545,665|560,680|600,682|625,665|640,640|660,638|700,642|750,645|780,650|800,670|825,678|845,660|865,610|885,590|930,580|960,598|1000,612|1035,615|1070,655|1100,665|1130,683|1180,672|1203,673|1225,640|1260,635|1300,625|1310,590|1330,565|1355,572|1390,585|1435,588|1460,625|1500,635|1545,655|1566,675",
  "0,675|60,673|85,687|105,690|133,708|180,685|200,680|235,655|265,650|285,635|330,648|400,640|430,650|490,650|530,630|545,640|570,655|625,652|665,630|730,615|780,628|820,650|870,668|905,685|940,688|970,675|990,662|1045,658|1065,690|1095,718|1110,708|1130,683|1150,682|1190,657|1230,660|1250,650|1290,647|1330,652|1375,655|1410,670|1480,658|1520,668|1540,655",
  "0,655|45,648|100,655|130,635|180,650|225,660|260,680|330,672|380,675|425,697|470,688|505,667|540,665|610,668|650,660|680,672|740,692|774,680"
);
const AO_SLOW = lower(
  "20,690|80,683|118,688|145,697|180,695|220,692|262,700|320,682|385,653|430,645|460,650|500,668|550,665|625,665|680,645|740,650|790,653|850,655|870,640|905,600|935,585|960,582|1050,600|1100,628|1160,648|1200,648|1240,633|1290,630|1310,628|1370,585|1400,578|1445,573|1475,583|1510,603|1566,618",
  "0,618|50,640|80,648|125,685|180,693|230,685|290,658|360,658|430,640|490,640|530,625|560,620|620,640|650,635|720,608|780,612|870,650|950,668|1000,655|1045,650|1110,695|1145,703|1200,675|1310,657|1400,660|1500,660|1540,657",
  "0,655|40,652|100,655|150,645|180,645|290,668|350,663|400,678|450,695|490,688|550,675|600,683|670,675|740,692|774,690"
);

function Awesome() {
  const zero = 901.5;
  return (
    <Panel
      top={864}
      height={58}
      className="h-[59px]"
      legend={<Legend swatch={<Swatch className="bg-[#728c98]" />}>Awesome Evolution Doc</Legend>}
      axis={
        <>
          <AxisTick y={870} text="0,04" />
          <AxisTick y={886} text="0,02" />
          <AxisTick y={894} text="0" color="#0000c0" boxed w={7} />
          <AxisTick y={905} text="-0,0031" color="#008080" boxed />
          <AxisTick y={909} text="-0,0103" color="#20b080" boxed />
          <AxisTick y={915} text="-0,0105" color="#5cf05c" boxed />
        </>
      }
    >
      <Grid y1={864} y2={922} rows={[870, 886, 917]} />
      <g shapeRendering="crispEdges">
        {CANDLES.map((_, i) => {
          const x = barX(i);
          const f = valueAt(AO_FAST, x);
          const s = valueAt(AO_SLOW, x);
          const rising = valueAt(AO_FAST, x + 3) < valueAt(AO_FAST, x - 3);
          const c = f < zero ? (rising ? "#0000f0" : "#ff00ff") : rising ? "#008888" : "#f01010";
          return (
            <g key={i}>
              {s < f && <rect x={x - 1} y={s} width="2" height={Math.max(0, Math.min(f, zero) - s)} fill="#ffc8c8" />}
              <rect x={x - 1} y={Math.min(f, zero)} width="3" height={Math.abs(f - zero)} fill={c} />
            </g>
          );
        })}
      </g>
      <Tinted pts={AO_FAST} color={(a, b) => (b[1] <= a[1] ? "#000030" : "#b000b0")} width={4} />
      <Tinted pts={AO_SLOW} color={(a, b) => (b[1] < a[1] ? "#58f858" : "#ff9800")} width={4} />
      <HLine y={zero} x2={1598} color="#1010f0" />
      <Marks pts={lower("117,688|440,642|555,668|683,640|752,652|797,657|935,585|1261,638|1375,580", "430,637|528,625|683,622|1037,650|1335,658|1405,668|1490,660", "47,652|162,647|685,678")} color="#fff000" />
      <Marks pts={lower("22,690|145,695|525,668|625,660|727,648|782,648|850,650|1235,630|1305,630", "177,692|500,632|670,630|993,657|1122,690|1377,653|1448,665|1550,660", "8,660|77,658|467,695|757,690")} up color="#00f0f0" />
    </Panel>
  );
}

const FORCE_BANDS = [
  ["#b0eefc", spans("20-1568", "0-691|1115-1200", "")],
  ["#fffb8a", spans("66-78|745-786|1169-1198", "294-323|436-478|590-620|691-1058|1200-1568", "0-774")],
  ["#6a6abf", spans("122-137|149-194|206-220|235-277|320-363|377-390|404-419|461-532|546-561|603-632|703-715|801-816|828-899|929-943|1041-1071|1127-1154|1210-1323|1438-1465", "69-96|110-152|252-265|336-350|380-436|492-507|549-563|635-647|661-676|1058-1115", "")],
  ["#40ff40", spans("78-107", "478-492|747-762|789-818|831-845|889-946|958-987|1044-1058|1227-1242|1257-1269|1355-1370|1384-1426|1482-1511|1524-1538", "25-38|53-68|111-168|214-241|314-329|357-430|445-475|503-518|648-691|749-779")],
  ["#600000", spans("107-122|786-801|1198-1210", "323-336|507-519|620-635|1073-1085", "")],
];
const FORCE = lower(
  "22,875|45,880|75,892|98,890|115,872|160,873|185,860|215,862|240,870|265,865|305,873|345,858|380,857|430,865|460,868|490,845|525,833|550,840|580,855|640,850|680,872|710,880|750,888|800,883|840,880|870,840|893,828|920,842|970,852|1020,873|1060,870|1110,883|1150,885|1195,892|1210,850|1240,812|1260,798|1290,795|1310,760|1322,740|1345,745|1380,758|1400,785|1420,812|1455,792|1490,805|1520,835|1566,855",
  "0,855|50,873|95,865|140,850|190,865|245,872|265,880|320,892|345,875|370,883|430,880|480,893|510,878|570,878|605,887|680,885|710,893|750,895|790,915|850,908|885,920|920,893|990,893|1045,905|1080,870|1108,855|1140,870|1195,880|1215,892|1280,895|1350,912|1370,900|1440,892|1470,905|1540,905",
  "0,905|60,907|110,915|135,900|165,892|210,905|245,893|290,912|350,920|410,900|470,902|530,910|590,930|645,938|680,920|740,925|774,922"
);

function Force() {
  const base = 995;
  const warm = FORCE_BANDS[1][1];
  return (
    <Panel
      top={923}
      height={72}
      className="h-[73px]"
      legend={<Legend swatch={<HalfSwatch left="bg-black" right="bg-[#728c98]" />}>Barra Fuerza Fondo Mercado v4 (f)</Legend>}
      axis={
        <>
          <AxisTick y={929} text="0,50004" />
          <AxisTick y={954} text="0,50002" />
          <AxisTick y={977} text="0,50000" boxed />
          <AxisTick y={988} text="0,49999" color="#0000d0" boxed />
        </>
      }
    >
      <Grid y1={923} y2={995} rows={[929, 954, 977]} />
      <g shapeRendering="crispEdges">
        {FORCE_BANDS.map(([c, list]) =>
          list.map(([l, r], i) => <rect key={c + i} x={l} y="923" width={r - l} height="72" fill={c} />)
        )}
        {CANDLES.map((_, i) => {
          const x = barX(i);
          const y = valueAt(FORCE, x);
          const up = valueAt(FORCE, x + 3) < valueAt(FORCE, x - 3);
          const hot = warm.some(([l, r]) => x >= l && x <= r);
          const edge = up ? "#2020a0" : hot ? "#d03a1c" : "#b03a48";
          const fill = up ? (hot ? "#20689c" : "#2424d8") : hot ? "#f87838" : "#da5c64";
          return (
            <g key={i}>
              <rect x={x - 3} y={y} width="6" height={base - y} fill={edge} fillOpacity=".9" />
              <rect x={x - 1} y={y + 3} width="2" height={Math.max(0, base - y - 3)} fill={fill} />
            </g>
          );
        })}
      </g>
      <HLine y={977.5} x2={1598} color="#000" />
    </Panel>
  );
}

function DateAxis() {
  return (
    <div className="h-[15px] shrink-0 border-t border-[#6f8692]">
      <svg className="h-full w-full" viewBox="28 996 1886 14" preserveAspectRatio="xMinYMid meet" fontFamily={FONT}>
        <g stroke="#6f8692">
          {GRID_X.map((x) => (
            <line key={x} x1={x + 0.5} x2={x + 0.5} y1="996" y2="999" />
          ))}
        </g>
        <g fontSize="10" fontWeight="700" textAnchor="middle" fill="#111">
          {DATES.map(([x, t]) => (
            <text key={x} x={x} y="1008">{t}</text>
          ))}
        </g>
      </svg>
    </div>
  );
}

/* ---------- toolbars ---------- */

const Sep = () => <span className="h-full w-px shrink-0 bg-[#6f8692]" />;

function Key({ children, active, className }) {
  return (
    <button
      type="button"
      aria-pressed={!!active}
      className={`flex h-4 shrink-0 items-center justify-center rounded-sm border border-[#84a0ae] leading-none ${active ? "bg-[#8ca4b0]" : "bg-[#b3cedb]"} ${className}`}
    >
      {children}
    </button>
  );
}

function Picker({ label, value, className }) {
  return (
    <label className={`relative flex h-full shrink-0 items-center ${className}`}>
      <span className="sr-only">{label}</span>
      <select className="h-full w-full appearance-none bg-transparent pl-1 font-bold outline-none" defaultValue={value}>
        <option>{value}</option>
      </select>
      <ChevronDown className="pointer-events-none absolute right-1 h-[9px] w-[9px]" strokeWidth={3} />
    </label>
  );
}

function TopBar() {
  return (
    <header className="flex h-[23px] shrink-0 items-center border-b-2 border-t border-b-[#4c6674] border-t-[#3f5866] bg-gradient-to-b from-[#b9d4e2] to-[#9bb9c6] font-['Roboto',Arial,sans-serif] text-[10px] font-bold text-black">
      <button type="button" aria-label="Tipo de gráfico" className="flex w-[25px] justify-center">
        <svg width="14" height="14" viewBox="0 0 14 14" fill="#1c8a1c">
          <path d="M3 5v9M7 2v9M11 1v8" stroke="#0c5c0c" /><path d="M2 8h2v4H2zM6 4h2v5H6zM10 3h2v4h-2z" stroke="#28a028" />
        </svg>
      </button>
      <button type="button" aria-label="Vincular" className="flex w-3 justify-center">
        <svg width="8" height="14" viewBox="0 0 8 14" fill="none" stroke="#637b88"><path d="M1 6V2h2v4M5 6V2h2v4M1 8v4h2V8M5 8v4h2V8M2 6v2M6 6v2" /></svg>
      </button>
      <Sep />
      <Picker label="Valor" value="EURUSD" className="w-[62px]" />
      <Sep />
      <div className="flex items-center gap-1 pl-[3px] pr-1">
        <Key className="w-[25px]">144s</Key>
        <Key className="w-[19px]">1m</Key>
        <Key className="w-[23px]">12m</Key>
        <Key className="w-[23px]">56m</Key>
        <Key className="w-4">1h</Key>
        <Key className="w-4">4h</Key>
        <Key className="w-3" active>D</Key>
        <Key className="w-[15px]">W</Key>
        <Key className="w-[11px]">M</Key>
        <Key className="w-[14px]">Q</Key>
      </div>
      <Sep />
      <Picker label="Periodo" value="1 día" className="w-[41px]" />
      <Sep />
      <div className="flex items-center gap-1 px-[3px]">
        <Key className="w-[23px]">5kU</Key>
        <Key className="w-[27px]" active>10kU</Key>
        <Key className="w-[28px]">35kU</Key>
      </div>
      <Sep />
      <Picker label="Unidades" value="10 k unidades" className="w-[82px]" />
      <Sep />
      <button type="button" className="flex h-full w-[85px] items-center gap-2 pl-1">
        <svg width="17" height="16" viewBox="0 0 17 16" fill="none">
          <path d="M1 7L5 2l4 5 4-4 3 3" stroke="#2a9a2a" /><path d="M1 3l4 4 4-3 6 5" stroke="#c02020" />
          <path d="M1 12h3v4H1zM9 11h3v5H9z" fill="#e02020" /><path d="M4 13h5v3H4zM12 12h4v4h-4z" fill="#22b022" />
        </svg>
        Indicadores
      </button>
      <Sep />
      <button type="button" aria-label="Más indicadores" className="flex w-[14px] justify-center"><ChevronDown className="h-[9px] w-[9px]" strokeWidth={3} /></button>
      <Sep />
      <span className="ml-[6px] flex h-[10px] w-[10px] items-center justify-center bg-[#f0f0f0] text-[9px] leading-none text-[#888]">i</span>
      <span className="ml-[9px] h-[7px] w-[7px] rounded-full bg-[#8b8b8b]" />
      <span className="ml-[5px] flex h-[14px] w-[40px] items-center justify-center rounded-sm border border-[#38c838] bg-[#58e058] text-[10px] font-normal text-white">+0,14 %</span>
      <span className="ml-1 w-[50px] whitespace-nowrap">7 nov 2025</span>
      <span className="ml-[2px] flex h-[14px] w-[49px] items-center justify-center rounded-sm border border-[#3a96d4] bg-[#62baea] font-normal">EUR/USD</span>
      <span className="flex-1" />
      <Sep />
      <button type="button" aria-label="Sincronizar" className="mx-[5px] flex">
        <svg width="13" height="13" viewBox="0 0 13 13" fill="none" strokeWidth="2">
          <path d="M2 7a4.500 4.500 0 0 1 8-3" stroke="#e03030" /><path d="M11 6a4.500 4.500 0 0 1-8 3.500" stroke="#28b028" /><path d="M4 6.500h5" stroke="#fff" />
        </svg>
      </button>
      <Sep />
      <div className="flex items-center gap-1 px-1 text-[#3f5866]">
        <button type="button" aria-label="Minimizar"><svg width="9" height="9" viewBox="0 0 9 9" stroke="currentColor"><path d="M1 7.500h6" /></svg></button>
        <button type="button" aria-label="Restaurar"><svg width="9" height="9" viewBox="0 0 9 9" fill="none" stroke="currentColor"><path d="M2.500 2.500v-2h6v5h-2M.5 2.500h6v5h-6z" /></svg></button>
        <button type="button" aria-label="Cerrar"><svg width="9" height="9" viewBox="0 0 9 9" stroke="currentColor"><path d="M1 1l7 7M8 1l-7 7" /></svg></button>
      </div>
    </header>
  );
}

const plus = (x, y) => <path d={`M${x - 2} ${y}h5M${x + 0.5} ${y - 2.5}v5`} stroke="#1a1ae0" fill="none" />;
const ellipseTool = (stroke, fill) => (
  <g>
    <ellipse cx="9" cy="9" rx="6.500" ry="4.500" fill={fill} stroke={stroke} strokeWidth="1.500" />
    {plus(2, 14)}
    {plus(15, 4)}
  </g>
);
const slant = (c, w) => <path d="M0 17L18 1" stroke={c} strokeWidth={w} />;
const flat = (c, w) => <path d="M0 9h18" stroke={c} strokeWidth={w} />;

const TOOLS = [
  ["Cursor", <path d="M6 3v11l3-3 2 5 2-1-2-4h4z" fill="#f4f4f4" stroke="#6a6a6a" />],
  ["Lupa", <g><circle cx="7" cy="7" r="4.500" fill="#d6e6ee" stroke="#333" /><path d="M10 10l5 5" stroke="#222" strokeWidth="2.500" /></g>],
  ["Zoom de área", <g><path d="M1 6h8v9H1z" fill="none" stroke="#1e70f0" strokeDasharray="2 1" /><circle cx="10" cy="7" r="4.500" fill="#d6e6ee" stroke="#333" /><path d="M13 10l4 5" stroke="#222" strokeWidth="2.500" /></g>],
  ["Alerta en línea", <g><path d="M0 3h18" stroke="#222" /><path d="M1 13c2-1 1-8 5-8s3 7 5 8z" fill="#ffd820" stroke="#b08a00" /><path d="M11 1l5 5M16 1l-5 5" stroke="#1a1ae0" /><path d="M12 5v8l2-2 1 3 1-1-1-3h2z" fill="#fff" stroke="#888" strokeWidth=".5" /></g>],
  ["Alerta", <g><path d="M3 13c3-2 1-10 6-10s3 8 6 10z" fill="#ffe030" stroke="#b08a00" /><path d="M7 15h4" stroke="#b08a00" strokeWidth="2" /><path d="M2 4c-2 2-2 3 0 5M16 4c2 2 2 3 0 5" stroke="#777" fill="none" /></g>],
  ["Proyección Fibonacci", <g fill="none"><path d="M1 10L4 3l4 9h5" stroke="#222" /><path d="M7 6h11" stroke="#ff7a40" strokeDasharray="2 1" />{plus(2, 9)}<path d="M13 9h5M14 8v8M14 12h3" stroke="#1414e0" strokeWidth="2" /></g>],
  ["Retroceso Fibonacci", <g fill="none"><path d="M4 5h14" stroke="#ff7a40" strokeWidth="2" strokeDasharray="2 1" /><path d="M4 8h8" stroke="#1a1ae0" strokeDasharray="3 1" /><path d="M13 9h5M14 8v8M14 12h3" stroke="#1414e0" strokeWidth="2" /></g>],
  ["Rectángulo azul", <g><path d="M3 5h12v9H3z" fill="#a8cbe8" stroke="#5a90ff" />{plus(2, 14)}{plus(15, 4)}</g>],
  ["Rectángulo rojo", <g><path d="M3 5h12v9H3z" fill="#c8a0a8" stroke="#f02020" strokeWidth="1.500" />{plus(2, 14)}{plus(15, 4)}</g>],
  ["Flecha", <g><path d="M5 13l8-7" stroke="#111" strokeWidth="2" /><path d="M9 4h6v6z" fill="#111" /><circle cx="5" cy="13" r="1.500" fill="none" stroke="#111" /></g>],
  ["Texto", <g><path d="M2.500 2.500h13v9l-4 4h-9z" fill="#b4d4ee" stroke="#5a90ff" /><path d="M5 6.500h8M9 6v7" stroke="#111" strokeWidth="2" /></g>],
  ["Globo", <g><circle cx="9" cy="9" r="6.500" fill="#b4d4ee" stroke="#5a90ff" /><path d="M8 15l3 3v-3" fill="#b4d4ee" stroke="#5a90ff" /><path d="M5 6.500h8M9 6v7" stroke="#128a12" strokeWidth="2" /></g>],
  ["Segmento", <g fill="none" stroke="#222"><path d="M5 12l8-6" strokeWidth="1.500" /><circle cx="4" cy="13" r="1.500" /><circle cx="14" cy="5" r="1.500" /></g>],
  ["Nivel verde", <g fill="none" stroke="#30b040" strokeWidth="1.500"><circle cx="7.500" cy="9" r="1.500" /><path d="M9 9h9" strokeWidth="1" /></g>],
  ["Nivel rojo", <g fill="none" stroke="#f01818" strokeWidth="1.500"><circle cx="7.500" cy="9" r="1.500" /><path d="M9 9h9" /></g>],
  ["Regla", <g><path d="M1 13L13 2l4 3L5 16z" fill="#b8bec4" stroke="#555f68" /><path d="M5 10l2 2M8 7l2 2M11 5l2 2" stroke="#555f68" /></g>],
  ["Patrón", <g fill="none"><path d="M1 4h16v5H1z" fill="#7ab890" /><path d="M1 9h16v5H1z" fill="#b0a0b4" /><path d="M1 3h16" stroke="#35a035" strokeDasharray="2 1" /><path d="M1 15h16" stroke="#d05050" strokeDasharray="2 1" /><path d="M1 12l4-5 3 4 3-5 3 5 3-4" stroke="#5a90ff" /></g>],
  ["Elipse roja", ellipseTool("#e82020", "#c8a0a8")],
  ["Elipse marrón", ellipseTool("#7a5a28", "#a09888")],
  ["Elipse verde", ellipseTool("#108030", "#78a898")],
  ["Elipse lima", ellipseTool("#20e820", "#90d8a8")],
  ["Línea negra", slant("#222", 1)],
  ["Línea verde", slant("#30a838", 1.5)],
  ["Línea roja", slant("#f01818", 2)],
  ["Horizontal negra", flat("#222", 1)],
  ["Horizontal salmón", flat("#f89080", 2)],
  ["Horizontal lima", flat("#10f010", 2)],
  ["Horizontal verde", flat("#108010", 2)],
  ["Horizontal roja", flat("#ff1010", 2)],
  ["Horizontal celeste", flat("#5a90ff", 2)],
  ["Horizontal azul", flat("#0000a8", 2)],
  ["Vertical", <path d="M9.500 0v18" stroke="#222" />],
  ["Ángulo", <g fill="none"><path d="M17 14H1L14 3" stroke="#e04848" /><path d="M8 7c3 1 3 4 3 7M7 9l3-2" stroke="#1414e0" strokeWidth="1.500" /><circle cx="15" cy="9" r="2" stroke="#1414e0" /></g>],
  ["Círculo", <g><circle cx="9" cy="9" r="6" fill="none" stroke="#f08030" strokeWidth="1.500" />{plus(8, 9)}{plus(13, 5)}</g>],
  ["Ondas de impulso", <g fill="none" stroke="#1e50f0"><path d="M1 15l4-8 3 7 4-9 3 6 3-9" strokeDasharray="2 1" />{plus(3, 5)}{plus(9, 15)}{plus(14, 2)}</g>],
  ["Ondas ABC", <g fill="none" stroke="#1e50f0"><path d="M1 13l6-8 5 8 5-4" strokeDasharray="2 1" />{plus(3, 14)}{plus(9, 4)}{plus(14, 14)}</g>],
  ["Validar", <path d="M1 9l3-2 3 4 9-9 1 3L8 17z" fill="#4cc04c" stroke="#208020" />],
  ["Me gusta", <path d="M2 8h3v8H2zM5 8l4-6 2 1-1 4h6l-1 9H5z" fill="#40c840" stroke="#208020" />],
  ["Descartar", <path d="M2 4l3-2 4 4 4-4 3 2-4 5 4 5-3 2-4-4-4 4-3-2 4-5z" fill="#f01818" stroke="#a01010" />],
  ["Aviso", <g><path d="M9 2l8 14H1z" fill="#ffc040" stroke="#a07830" /><path d="M9 7v4M9 13v2" stroke="#333" strokeWidth="2" /></g>],
  ["Flecha verde", <path d="M9 3l5 6h-3v6H7V9H4z" fill="#30b030" stroke="#187818" />],
  ["Flecha roja", <path d="M7 6h4v6h3l-5 5-5-5h3z" fill="#d02020" />],
];

function Tools() {
  return (
    <aside className="flex w-7 shrink-0 flex-col border-l border-r border-l-[#3f5866] border-r-[#6f8692] bg-[#9ab8c5]">
      <button type="button" aria-label="Subir" className="flex h-3 shrink-0 items-center justify-center border-b border-[#84a0ae] text-[#6f8692]"><ChevronUp className="h-2 w-2" /></button>
      <div className="flex min-h-0 flex-1 flex-col items-center overflow-hidden">
        {TOOLS.map(([name, art], i) => (
          <button
            key={name}
            type="button"
            aria-label={name}
            className={`flex h-[22px] w-[22px] shrink-0 items-center justify-center rounded-sm ${i === 0 ? "border border-[#6f8692] bg-[#8ca4b0]" : ""}`}
          >
            <svg className="shrink-0" width="18" height="18" viewBox="0 0 18 18" fill="none">{art}</svg>
          </button>
        ))}
      </div>
      <button type="button" aria-label="Bajar" className="flex h-[11px] shrink-0 items-center justify-center border-y border-[#84a0ae] bg-[#b5d0dd]"><ChevronDown className="h-2 w-2" strokeWidth={3} /></button>
      <button type="button" aria-label="Configurar objetos" className="flex h-[28px] shrink-0 items-center justify-center">
        <svg width="20" height="20" viewBox="0 0 20 20">
          <path d="M6 5h10v11H6z" fill="#eef2f4" stroke="#8a98a0" /><path d="M8 13l5-4" stroke="#d03030" /><path d="M12 16l5-5" stroke="#fff" strokeWidth="3" />
          <circle cx="5" cy="5" r="4" fill="#1c8a1c" /><path d="M5 3v4M4 4l1-1" stroke="#fff" /><path d="M13 16h6l-3 3z" fill="#111" />
        </svg>
      </button>
      <button type="button" aria-label="Más" className="flex h-[26px] shrink-0 items-center justify-center">
        <svg width="16" height="12" viewBox="0 0 16 12" fill="#333"><circle cx="3" cy="4" r="1.500" /><circle cx="8" cy="4" r="1.500" /><circle cx="13" cy="4" r="1.500" /><path d="M10 7h5l-2.500 3z" /></svg>
      </button>
      <button type="button" aria-label="Dibujar" className="flex h-5 shrink-0 items-center justify-center bg-[#86a0ac]">
        <svg width="18" height="18" viewBox="0 0 18 18" fill="none"><path d="M1 5l6 10V5l3 6" stroke="#c02020" /><path d="M3 14L9 4" stroke="#187818" /><path d="M9 14L14 4l3 2-6 10-2 1z" fill="#f8d040" stroke="#806820" /></svg>
      </button>
    </aside>
  );
}

function BottomBar() {
  const btn = "flex h-5 w-[21px] shrink-0 items-center justify-center";
  return (
    <footer className="flex h-5 shrink-0 items-center border-t border-[#6f8692] bg-[#9ab8c5]">
      <button type="button" aria-label="Compartir" className={btn}>
        <svg width="15" height="15" viewBox="0 0 15 15" fill="#f4f8fa" stroke="#f4f8fa"><path d="M3 7l7-4M3 7l7 5" strokeWidth="1.500" /><circle cx="3" cy="7" r="2" /><circle cx="10" cy="3" r="2" /><circle cx="10" cy="11" r="2" /><path d="M10 12h5l-2.500 3z" fill="#222" stroke="none" /></svg>
      </button>
      <button type="button" aria-label="Mensajes" className={btn}>
        <svg width="15" height="15" viewBox="0 0 15 15"><rect x="1" y="1" width="9" height="8" rx="1" fill="#8cb8e8" stroke="#4a80c8" /><path d="M4 4h10v8H9l-2 2v-2H4z" fill="#4a90e8" /><path d="M6 8h1M8.500 8h1M11 8h1" stroke="#fff" /></svg>
      </button>
      <button type="button" aria-label="Orden" className={btn}>
        <svg width="13" height="15" viewBox="0 0 13 15"><rect x="1" y="1" width="11" height="13" fill="#eee" stroke="#666" /><path d="M2 2h5L2 7z" fill="#c02020" /><path d="M11 13H6l5-5z" fill="#18901c" /><path d="M3 12L10 3" stroke="#222" /></svg>
      </button>
      <button type="button" aria-label="Libro" className={btn}>
        <svg width="15" height="14" viewBox="0 0 15 14"><path d="M1 1h6v3H1zM3 5h4v3H3zM0 10h7v3H0z" fill="#18a028" /><path d="M8 1h4v3H8zM8 5h6v3H8zM8 10h5v3H8z" fill="#d82828" /></svg>
      </button>
      <button type="button" aria-label="Ventanas" className={btn}>
        <svg width="16" height="15" viewBox="0 0 16 15" fill="#fff" stroke="#2a70c8"><rect x=".5" y=".5" width="9" height="8" /><path d="M.5 1.500h9" strokeWidth="2" /><rect x="6.500" y="5.500" width="9" height="9" /><path d="M6.500 6.500h9" strokeWidth="2" /><path d="M8 12l2-2 2 2 2-3" stroke="#18901c" fill="none" /></svg>
      </button>
      <button type="button" aria-label="Contraer" className="flex w-[15px] shrink-0 justify-center text-[#334]"><ChevronsLeft className="h-3 w-3" /></button>
      <div className="flex h-[13px] min-w-0 flex-1 border border-[#6f8692]" role="scrollbar" aria-controls="graficos" aria-valuenow={93} aria-orientation="horizontal">
        <button type="button" aria-label="Desplazar a la izquierda" className="flex w-3 items-center justify-center border-r border-[#6f8692] bg-[#b5d0dd]"><ChevronLeft className="h-2 w-2" strokeWidth={3} /></button>
        <span className="flex-1" />
        <span className="w-[46px] border-x border-[#6f8692] bg-gradient-to-b from-[#b9d4e2] to-[#9bb9c6]" />
        <span className="w-[39px]" />
        <button type="button" aria-label="Desplazar a la derecha" className="flex w-3 items-center justify-center border-l border-[#6f8692] bg-[#b5d0dd]"><ChevronRight className="h-2 w-2" strokeWidth={3} /></button>
      </div>
      <div className="flex w-[149px] shrink-0 items-center justify-between overflow-hidden pl-[7px]">
        <button type="button" aria-label="Deshacer"><svg width="14" height="14" viewBox="0 0 14 14" fill="none"><path d="M5 2L2 5l3 3M2 5h6c4 0 4 6 0 7" stroke="#5b93cc" strokeWidth="2" /></svg></button>
        <button type="button" aria-label="Rehacer"><svg width="14" height="14" viewBox="0 0 14 14" fill="none"><path d="M9 2l3 3-3 3M12 5H6c-4 0-4 6 0 7" stroke="#5b93cc" strokeWidth="2" /></svg></button>
        <button type="button" aria-label="Ajustes"><svg width="16" height="16" viewBox="0 0 16 16"><path d="M11 1h4v11h-4z" fill="#30c030" stroke="#107010" /><path d="M1 9h3v5H1z" fill="#e83030" stroke="#901010" /><path d="M4 14l7-8" stroke="#555" strokeWidth="4" /><path d="M4 14l7-8" stroke="#e8e8e8" strokeWidth="2.500" /></svg></button>
        <button type="button" aria-label="Zoom automático"><svg width="17" height="16" viewBox="0 0 17 16"><circle cx="6" cy="6" r="5" fill="#d8d8d8" stroke="#444" /><path d="M9 10l4 5" stroke="#222" strokeWidth="2.500" /><path d="M1 14h8M15 2v9M13.500 3.500L15 2l1.500 1.500M13.500 9.500L15 11l1.500-1.500" stroke="#1414e0" fill="none" /></svg></button>
        <button type="button" aria-label="Alejar"><svg width="15" height="15" viewBox="0 0 15 15"><circle cx="6" cy="6" r="4.500" fill="#fff" stroke="#333" /><path d="M3.500 6h5" stroke="#1414e0" strokeWidth="2" /><path d="M9 9l5 5" stroke="#222" strokeWidth="2.500" /></svg></button>
        <button type="button" aria-label="Acercar"><svg width="15" height="15" viewBox="0 0 15 15"><circle cx="6" cy="6" r="4.500" fill="#fff" stroke="#333" /><path d="M3.500 6h5M6 3.500v5" stroke="#1414e0" strokeWidth="2" /><path d="M9 9l5 5" stroke="#222" strokeWidth="2.500" /></svg></button>
        <button type="button" aria-label="Ir al final"><svg width="10" height="14" viewBox="0 0 10 14"><path d="M0 2.500h10" stroke="#333" strokeWidth="3" strokeDasharray="2 1" /><path d="M6 6v3H3l4 4 3-3V6z" fill="#2a70c8" /></svg></button>
      </div>
    </footer>
  );
}

export default function App() {
  return (
    <div className="flex h-screen flex-col overflow-hidden bg-white font-['Liberation_Sans',Arial,sans-serif] text-[10px]">
      <TopBar />
      <div className="flex min-h-0 flex-1">
        <Tools />
        <div className="flex min-w-0 flex-1 flex-col">
          <main id="graficos" className="flex min-h-0 flex-1 flex-col">
            <PriceChart />
            <Trains />
            <Willy />
            <Awesome />
            <Force />
            <DateAxis />
          </main>
          <BottomBar />
        </div>
      </div>
    </div>
  );
}
